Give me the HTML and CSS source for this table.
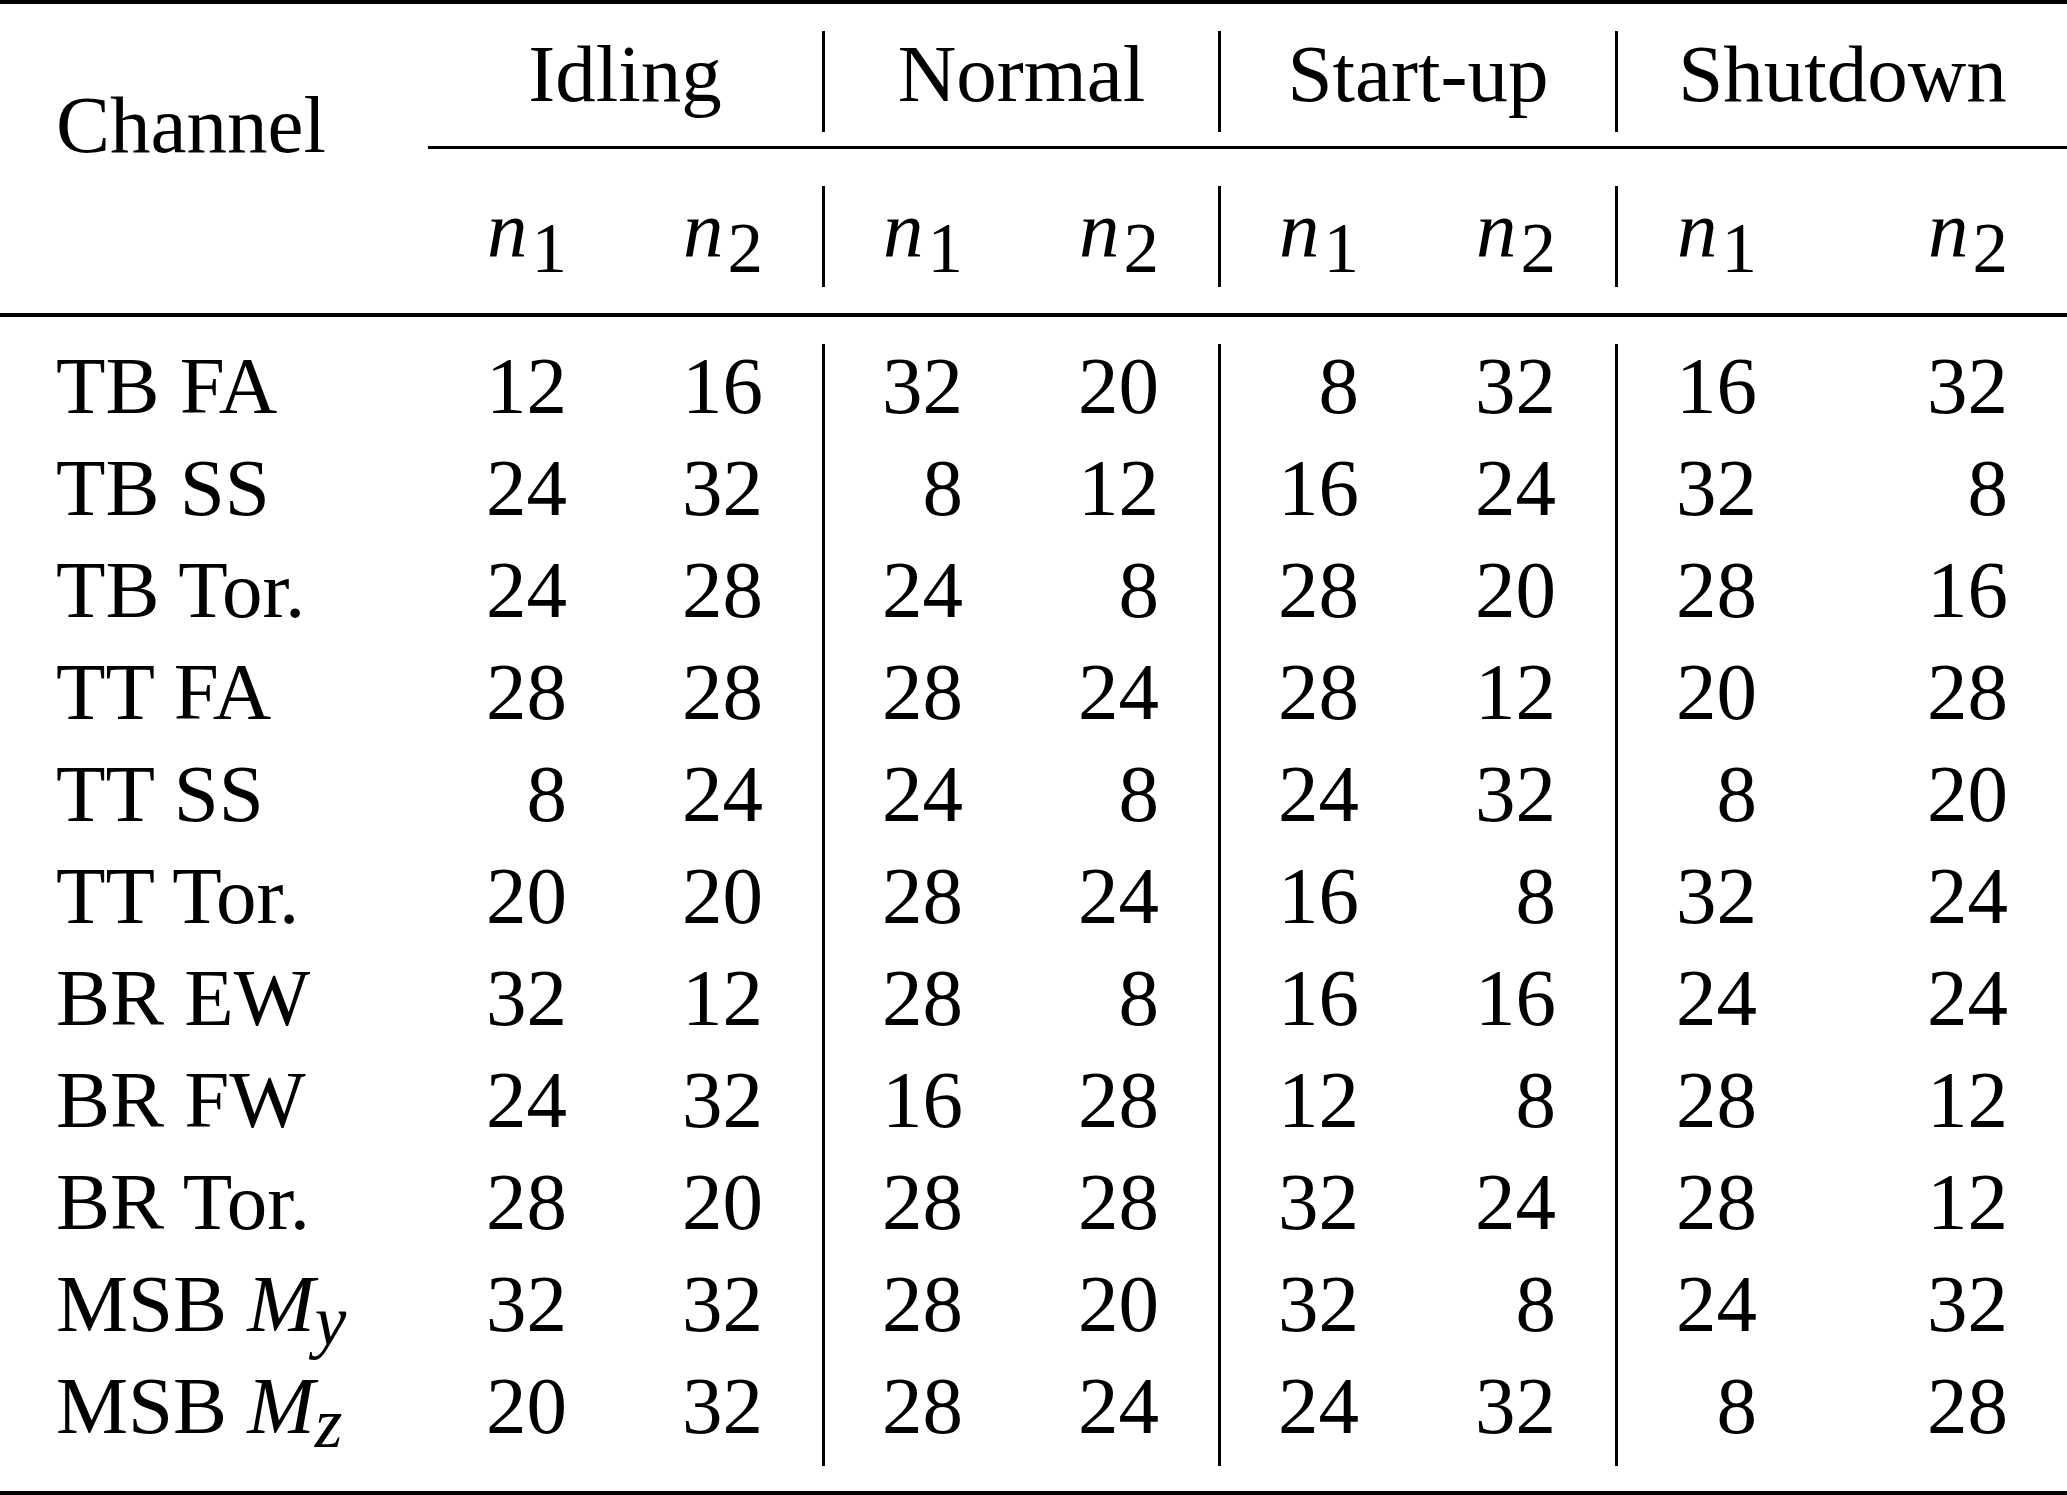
FILE: index.html
```html
<!DOCTYPE html>
<html lang="en">
<head>
<meta charset="utf-8">
<title>Channel table</title>
<link rel="stylesheet" href="styles.css">
</head>
<body>
<div class="tbl">
  <div class="rule heavy"></div>
  <div class="head">
    <div class="chan">Channel</div>
    <div class="grp g1">Idling</div>
    <div class="grp g2 bar">Normal</div>
    <div class="grp g3 bar">Start-up</div>
    <div class="grp g4 bar">Shutdown</div>
    <div class="cmid"></div>
    <div class="nh c1"><i class="v">n</i><sub class="s">1</sub></div>
    <div class="nh c2"><i class="v">n</i><sub class="s">2</sub></div>
    <div class="nh c3 bar"><i class="v">n</i><sub class="s">1</sub></div>
    <div class="nh c4"><i class="v">n</i><sub class="s">2</sub></div>
    <div class="nh c5 bar"><i class="v">n</i><sub class="s">1</sub></div>
    <div class="nh c6"><i class="v">n</i><sub class="s">2</sub></div>
    <div class="nh c7 bar"><i class="v">n</i><sub class="s">1</sub></div>
    <div class="nh c8"><i class="v">n</i><sub class="s">2</sub></div>
  </div>
  <div class="rule mid"></div>
  <div class="body">
    <div class="lab">TB FA</div><div class="num">12</div><div class="num">16</div><div class="num bar">32</div><div class="num">20</div><div class="num bar">8</div><div class="num">32</div><div class="num bar">16</div><div class="num">32</div>
    <div class="lab">TB SS</div><div class="num">24</div><div class="num">32</div><div class="num bar">8</div><div class="num">12</div><div class="num bar">16</div><div class="num">24</div><div class="num bar">32</div><div class="num">8</div>
    <div class="lab">TB Tor.</div><div class="num">24</div><div class="num">28</div><div class="num bar">24</div><div class="num">8</div><div class="num bar">28</div><div class="num">20</div><div class="num bar">28</div><div class="num">16</div>
    <div class="lab">TT FA</div><div class="num">28</div><div class="num">28</div><div class="num bar">28</div><div class="num">24</div><div class="num bar">28</div><div class="num">12</div><div class="num bar">20</div><div class="num">28</div>
    <div class="lab">TT SS</div><div class="num">8</div><div class="num">24</div><div class="num bar">24</div><div class="num">8</div><div class="num bar">24</div><div class="num">32</div><div class="num bar">8</div><div class="num">20</div>
    <div class="lab">TT Tor.</div><div class="num">20</div><div class="num">20</div><div class="num bar">28</div><div class="num">24</div><div class="num bar">16</div><div class="num">8</div><div class="num bar">32</div><div class="num">24</div>
    <div class="lab">BR EW</div><div class="num">32</div><div class="num">12</div><div class="num bar">28</div><div class="num">8</div><div class="num bar">16</div><div class="num">16</div><div class="num bar">24</div><div class="num">24</div>
    <div class="lab">BR FW</div><div class="num">24</div><div class="num">32</div><div class="num bar">16</div><div class="num">28</div><div class="num bar">12</div><div class="num">8</div><div class="num bar">28</div><div class="num">12</div>
    <div class="lab">BR Tor.</div><div class="num">28</div><div class="num">20</div><div class="num bar">28</div><div class="num">28</div><div class="num bar">32</div><div class="num">24</div><div class="num bar">28</div><div class="num">12</div>
    <div class="lab">MSB <i class="v">M</i><sub class="s tight"><i class="v">y</i></sub></div><div class="num">32</div><div class="num">32</div><div class="num bar">28</div><div class="num">20</div><div class="num bar">32</div><div class="num">8</div><div class="num bar">24</div><div class="num">32</div>
    <div class="lab">MSB <i class="v">M</i><sub class="s tight"><i class="v">z</i></sub></div><div class="num">20</div><div class="num">32</div><div class="num bar">28</div><div class="num">24</div><div class="num bar">24</div><div class="num">32</div><div class="num bar">8</div><div class="num">28</div>
  </div>
  <div class="rule heavy"></div>
</div>
</body>
</html>
```

FILE: styles.css
```css
html, body {
  margin: 0;
  padding: 0;
  background: #ffffff;
}

.tbl {
  width: 2067px;
  font-family: "Liberation Serif", "Times New Roman", serif;
  font-size: 81px;
  line-height: 85px;
  color: #000000;
}

.rule {
  background: #000000;
}
.rule.heavy {
  height: 4px;
}
.rule.mid {
  height: 4px;
}

.head,
.body {
  display: grid;
  grid-template-columns: 428px 198px 196px 200px 196px 200px 197px 201px 251px;
}

.head {
  grid-template-rows: 27px 101px 14px 3px 37px 101px 26px;
}

.body {
  grid-auto-rows: 102px;
  padding: 27px 0 25px;
}

.bar {
  border-left: 3px solid #000000;
}

.chan {
  grid-column: 1;
  grid-row: 1 / -1;
  padding: 79px 0 0 56px;
}

.grp {
  grid-row: 2;
  text-align: center;
  padding-top: 1px;
}
.g1 { grid-column: 2 / 4; }
.g2 { grid-column: 4 / 6; }
.g3 { grid-column: 6 / 8; }
.g4 { grid-column: 8 / 10; }

.cmid {
  grid-row: 4;
  grid-column: 2 / -1;
  background: #000000;
}

.nh {
  grid-row: 6;
  text-align: right;
  padding: 1px 59px 0 0;
}
.c1 { grid-column: 2; }
.c2 { grid-column: 3; }
.c3 { grid-column: 4; }
.c4 { grid-column: 5; }
.c5 { grid-column: 6; }
.c6 { grid-column: 7; }
.c7 { grid-column: 8; }
.c8 { grid-column: 9; }

.v {
  font-style: italic;
}

.s {
  font-size: 71px;
  line-height: 0;
  vertical-align: -16px;
  margin-left: 4px;
}
.s.tight {
  vertical-align: -14px;
  margin-left: 0;
}

.lab {
  padding-left: 56px;
  white-space: nowrap;
}

.num {
  text-align: right;
  padding-right: 59px;
}
```
